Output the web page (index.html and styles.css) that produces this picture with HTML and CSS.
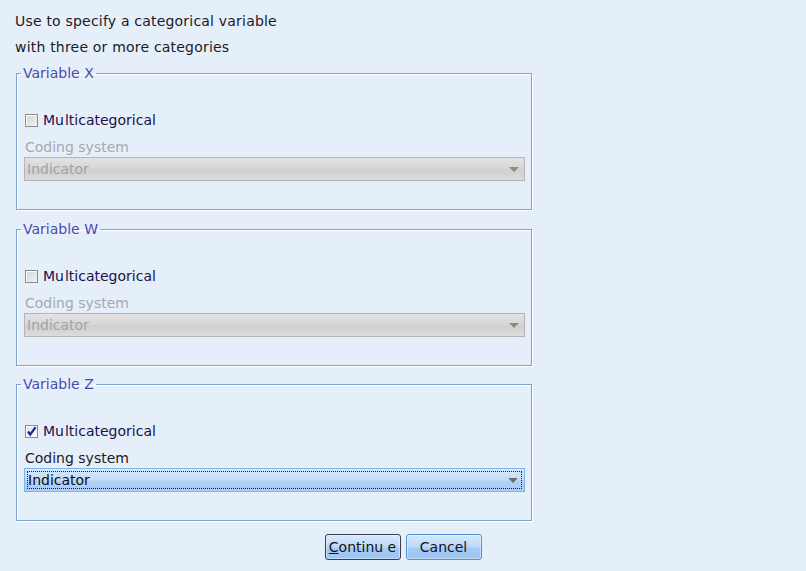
FILE: index.html
```html
<!DOCTYPE html>
<html>
<head>
<meta charset="utf-8">
<link rel="stylesheet" href="styles.css">
</head>
<body>
<div class="dialog">
  <div class="intro">
    <div class="line">Use to specify a categorical variable</div>
    <div class="line">with three or more categories</div>
  </div>

  <fieldset class="group">
    <legend class="title">Variable X</legend>
    <div class="check-row">
      <span class="box"></span>
      <span class="label">Mu<span class="kern">l</span>ticategorical</span>
    </div>
    <div class="caption disabled">Coding system</div>
    <div class="combo off"><span class="val">Indicator</span><span class="arrow"></span></div>
  </fieldset>

  <fieldset class="group">
    <legend class="title">Variable W</legend>
    <div class="check-row">
      <span class="box"></span>
      <span class="label">Mu<span class="kern">l</span>ticategorical</span>
    </div>
    <div class="caption disabled">Coding system</div>
    <div class="combo off"><span class="val">Indicator</span><span class="arrow"></span></div>
  </fieldset>

  <fieldset class="group last">
    <legend class="title">Variable Z</legend>
    <div class="check-row">
      <span class="box checked"><svg viewBox="0 0 13 13" width="13" height="13"><path d="M3 6.5 L5.2 9.6 L10.6 2.2" fill="none" stroke="#1d1d9c" stroke-width="2.2"/></svg></span>
      <span class="label">Mu<span class="kern">l</span>ticategorical</span>
    </div>
    <div class="caption">Coding system</div>
    <div class="combo on"><span class="focus"><span class="val">Indicator</span><span class="arrow"></span></span></div>
  </fieldset>

  <div class="buttons">
    <button class="btn default"><u>C</u>ontinu e</button>
    <button class="btn">Cancel</button>
  </div>
</div>
</body>
</html>
```
FILE: styles.css
```css
html, body {
  margin: 0;
  padding: 0;
  background: #e5effa;
}
body {
  width: 806px;
  height: 571px;
  overflow: hidden;
  font-family: "DejaVu Sans", "Liberation Sans", sans-serif;
  font-size: 14px;
  color: #1c1a24;
}
.dialog {
  display: flex;
  flex-direction: column;
  padding: 8px 0 0 0;
}
.intro {
  padding-left: 15px;
  letter-spacing: 0.2px;
}
.line {
  height: 26px;
  line-height: 26px;
}
.group {
  margin: 5px 0 0 16px;
  width: 516px;
  box-sizing: border-box;
  padding: 0 6px 28px 8px;
  border: 1px solid #7ea3cf;
  box-shadow: 1px 1px 0 #ffffff, inset 1px 1px 0 #ffffff;
  min-width: 0;
}
.group + .group {
  margin-top: 11px;
}
.group.last {
  margin-top: 10px;
}
.title {
  margin-left: -4px;
  padding: 0 2px;
  line-height: 16px;
  color: #4a4ab0;
}
.check-row {
  display: flex;
  align-items: center;
  height: 20px;
  margin-top: 29px;
  gap: 5px;
}
.box {
  width: 11px;
  height: 11px;
  border: 1px solid #8c8c8c;
  background: linear-gradient(135deg, #d2d2d2, #f4f4f4);
  box-shadow: inset 1px 1px 0 #ffffff;
  position: relative;
  flex: none;
}
.box.checked {
  background: linear-gradient(135deg, #e0e0e0, #ffffff);
}
.box svg {
  position: absolute;
  left: -1px;
  top: -1px;
}
.label {
  color: #20104a;
}
.kern {
  margin-left: 1px;
}
.caption {
  margin-top: 9px;
  line-height: 16px;
}
.caption.disabled {
  color: #a9a9a9;
}
.combo {
  margin-top: 2px;
  height: 24px;
  width: 501px;
  margin-left: -1px;
  box-sizing: border-box;
  display: flex;
  align-items: stretch;
}
.combo.off {
  border: 1px solid #b5b5b5;
  background: linear-gradient(#e3e3e3 0%, #d5d5d5 50%, #cfcfcf 55%, #dcdcdc 100%);
  color: #a3a3a3;
  padding: 0 5px 0 2px;
  align-items: center;
  justify-content: space-between;
}
.combo.on {
  border: 1px solid #7ab4ee;
  background: linear-gradient(#d7e8fc 0%, #c2dcfa 50%, #b1d2f7 55%, #a9ccf5 100%);
  color: #0c0c14;
  padding: 2px;
}
.focus {
  flex: 1;
  display: flex;
  align-items: center;
  justify-content: space-between;
  border: 1px dotted #202020;
  padding: 0 3px 0 0;
}
.arrow {
  width: 0;
  height: 0;
  border-left: 5px solid transparent;
  border-right: 5px solid transparent;
  border-top: 5px solid #6e6e6e;
}
.combo.off .arrow {
  border-top-color: #8a8a8a;
}
.buttons {
  display: flex;
  justify-content: center;
  gap: 5px;
  margin-top: 13px;
}
.btn {
  font-family: "DejaVu Sans", "Liberation Sans", sans-serif;
  font-size: 14px;
  color: #141414;
  height: 26px;
  width: 76px;
  padding: 0;
  border: 1px solid #4f92dc;
  border-radius: 3px;
  background: linear-gradient(#d8e9fc 0%, #bcd8f9 50%, #a5cbf5 55%, #9bc5f3 100%);
  box-shadow: inset 0 0 0 1px rgba(255,255,255,0.4);
}
.btn.default {
  border-color: #3c3c4a;
}
.btn u {
  text-decoration: underline;
}
```
